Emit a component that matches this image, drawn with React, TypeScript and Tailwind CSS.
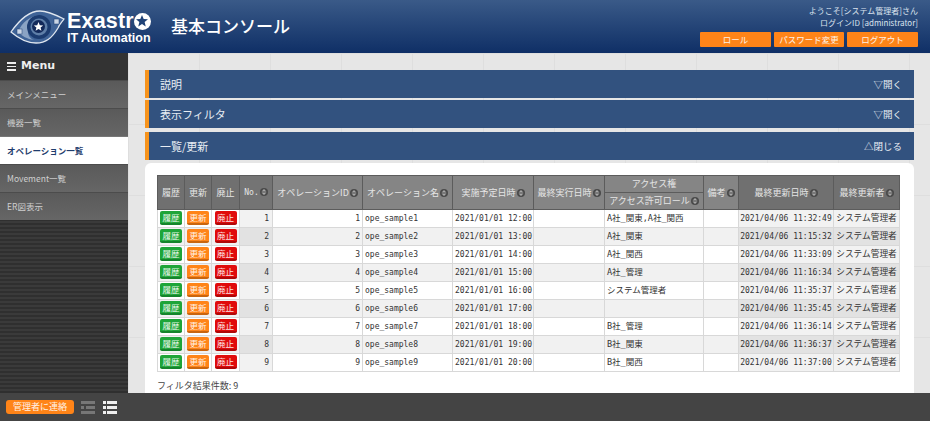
const JP = "font-['Noto_Sans_CJK_JP','Noto_Sans',sans-serif]"
const MONO = "font-['DejaVu_Sans_Mono','Noto_Sans_CJK_JP',monospace]"

const ROWS = [
  ["1", "ope_sample1", "2021/01/01 12:00", "A社_関東,A社_関西", "2021/04/06 11:32:49"],
  ["2", "ope_sample2", "2021/01/01 13:00", "A社_関東", "2021/04/06 11:15:32"],
  ["3", "ope_sample3", "2021/01/01 14:00", "A社_関西", "2021/04/06 11:33:09"],
  ["4", "ope_sample4", "2021/01/01 15:00", "A社_管理", "2021/04/06 11:16:34"],
  ["5", "ope_sample5", "2021/01/01 16:00", "システム管理者", "2021/04/06 11:35:37"],
  ["6", "ope_sample6", "2021/01/01 17:00", "", "2021/04/06 11:35:45"],
  ["7", "ope_sample7", "2021/01/01 18:00", "B社_管理", "2021/04/06 11:36:14"],
  ["8", "ope_sample8", "2021/01/01 19:00", "B社_関東", "2021/04/06 11:36:37"],
  ["9", "ope_sample9", "2021/01/01 20:00", "B社_関西", "2021/04/06 11:37:00"],
]

const MENU = ["メインメニュー", "機器一覧", "オペレーション一覧", "Movement一覧", "ER図表示"]

function Logo() {
  return (
    <svg width="57" height="38" viewBox="0 0 57 38" className="shrink-0">
      <path d="M1 24 C8 14 18 3 30 3 C38 3 46 7 54 11 C52 14 50 15 48 20 C42 30 36 35 26 35 C16 35 8 30 1 24 Z" fill="#3f6397" stroke="#dfe6ef" strokeWidth="1.300" />
      <path d="M8 24 C12 14 20 8 30 7 C22 12 18 18 18 24 C18 28 21 31 24 32 C17 31 12 28 8 24 Z" fill="#8aa3c4" />
      <circle cx="29" cy="19" r="12" fill="#1c3c70" />
      <circle cx="29" cy="19" r="8.500" fill="#5f7fa8" />
      <circle cx="28.500" cy="18.500" r="6.500" fill="#12295a" />
      <path d="M28.500 14 L29.800 17.200 L33.200 17.400 L30.600 19.500 L31.400 22.800 L28.500 21 L25.600 22.800 L26.400 19.500 L23.800 17.400 L27.200 17.200 Z" fill="#fff" />
      <rect x="44" y="11" width="5" height="5" fill="#c9d5e5" stroke="#1c3c70" strokeWidth="0.500" />
      <rect x="7" y="21" width="5" height="5" fill="#c9d5e5" stroke="#1c3c70" strokeWidth="0.500" />
    </svg>
  )
}

function SortIcon() {
  return (
    <svg width="8" height="8" viewBox="0 0 8 8" className="inline-block align-[-1px] ml-px">
      <circle cx="4" cy="4" r="4" fill="#4a4a4a" />
      <path d="M4 1 L6.500 3.400 H1.500 Z M4 7 L6.500 4.600 H1.500 Z" fill="#a8a8a8" />
    </svg>
  )
}

function Panel({ title, action }: { title: string; action: string }) {
  return (
    <div className="h-[28px] shrink-0 flex items-center justify-between bg-[#32527f] border-l-[4px] border-[#f7941d] pl-[11px] pr-[12px] text-[#e8edf3]">
      <span className="text-[11px]">{title}</span>
      <span className="text-[9.500px]">{action}</span>
    </div>
  )
}

function ActionButton({ label, color }: { label: string; color: string }) {
  return (
    <span className={`block w-[22px] h-[14px] mx-auto -mt-[2px] rounded-[2px] text-[8.500px] leading-[12px] text-center text-white/90 border-b-2 ${color}`}>
      {label}
    </span>
  )
}

function HeadCell({ label, sort = true, className = "", colSpan, rowSpan }: { label: string; sort?: boolean; className?: string; colSpan?: number; rowSpan?: number }) {
  return (
    <th colSpan={colSpan} rowSpan={rowSpan} className={`border border-[#5c5c5c] font-normal text-[#e6e6e6] p-0 whitespace-nowrap ${className}`}>
      {label}
      {sort && <SortIcon />}
    </th>
  )
}

export default function App() {
  return (
    <div className={`w-[930px] h-screen overflow-hidden flex flex-col bg-[#e6e6e6] ${JP}`}>
      {/* header */}
      <header className="h-[53px] shrink-0 flex items-start justify-between bg-gradient-to-b from-[#3a5a88] to-[#0f2f66]">
        <div className="flex items-start pl-[10px] pt-[8px]">
          <Logo />
          <div className="mt-[3px] text-white font-['Liberation_Sans',sans-serif] font-bold">
            <div className="flex items-center text-[21.500px] leading-[20px] tracking-[0.2px]">
              Exastr
              <span className="inline-flex items-center justify-center w-[17px] h-[17px] rounded-full bg-white">
                <svg width="12" height="12" viewBox="0 0 10 10">
                  <path d="M5 0 L6.400 3.400 L10 3.600 L7.200 5.900 L8.100 9.500 L5 7.500 L1.900 9.500 L2.800 5.900 L0 3.600 L3.600 3.400 Z" fill="#1f4277" />
                </svg>
              </span>
            </div>
            <div className="text-[12.500px] leading-[13px] mt-px">IT Automation</div>
          </div>
          <div className="ml-[20px] mt-[8px] text-white text-[17px] font-medium leading-5">基本コンソール</div>
        </div>
        <div className="flex flex-col items-end pr-[12px] pt-[5px] text-[8px] leading-[12px] text-[#dbe3ee]">
          <div>ようこそ[システム管理者]さん</div>
          <div>ログインID [administrator]</div>
          <div className="flex gap-[3px] mt-[3px]">
            {[
              ["ロール", "w-[71px]"],
              ["パスワード変更", "w-[70px]"],
              ["ログアウト", "w-[71px]"],
            ].map(([label, width]) => (
              <span key={label} className={`h-[15px] ${width} rounded-[1px] bg-[#ff8418] text-center text-[8.500px] leading-[15px] text-white/90`}>
                {label}
              </span>
            ))}
          </div>
        </div>
      </header>

      <div className="flex-1 min-h-0 flex">
        {/* sidebar */}
        <aside className="w-[128px] shrink-0 flex flex-col bg-[repeating-linear-gradient(0deg,#2f2f2f,#2f2f2f_2px,#3a3a3a_2px,#3a3a3a_4px)]">
          <div className="h-[27px] shrink-0 flex items-center gap-[5px] pl-[7px] bg-[#333] text-[#eee] text-[11px] font-bold font-['DejaVu_Sans',sans-serif]">
            <span className="flex flex-col gap-[2px]">
              <span className="block w-[9px] h-[1.500px] bg-[#eee]" />
              <span className="block w-[9px] h-[1.500px] bg-[#eee]" />
              <span className="block w-[9px] h-[1.500px] bg-[#eee]" />
            </span>
            Menu
          </div>
          {MENU.map((item) => {
            const active = item === "オペレーション一覧"
            return (
              <div
                key={item}
                className={
                  active
                    ? "h-[28px] shrink-0 flex items-center pl-[7px] bg-white text-[#1f3d6d] text-[8.500px] font-bold border-t border-[#777]"
                    : "h-[28px] shrink-0 flex items-center pl-[7px] bg-gradient-to-b from-[#5a5a5a] to-[#666] text-[#cfcfcf] text-[8.500px] border-t border-[#4c4c4c]"
                }
              >
                {item}
              </div>
            )
          })}
        </aside>

        {/* main */}
        <main className="flex-1 min-w-0 flex flex-col gap-[2px] pt-[17px] pl-[17px] pr-[16px] overflow-hidden bg-[#e6e6e6] bg-[linear-gradient(#dedede_1px,transparent_1px),linear-gradient(90deg,#dedede_1px,transparent_1px)] bg-[length:71px_71px]">
          <Panel title="説明" action="▽開く" />
          <Panel title="表示フィルタ" action="▽開く" />
          <div className="mt-[2px]">
            <Panel title="一覧/更新" action="△閉じる" />
          </div>
          <section className="mt-px flex-1 bg-white rounded-t-[6px] pt-[12px] px-[12px]">
            <table className="table-fixed border-collapse w-[742px] border border-[#666] text-[9px]">
              <colgroup>
                <col className="w-[27px]" />
                <col className="w-[27px]" />
                <col className="w-[28px]" />
                <col className="w-[33px]" />
                <col className="w-[90px]" />
                <col className="w-[90px]" />
                <col className="w-[81px]" />
                <col className="w-[71px]" />
                <col className="w-[99px]" />
                <col className="w-[35px]" />
                <col className="w-[95px]" />
                <col className="w-[66px]" />
              </colgroup>
              <thead>
                <tr className="h-[17px]">
                  <HeadCell label="履歴" sort={false} rowSpan={2} className="bg-[#707070]" />
                  <HeadCell label="更新" sort={false} rowSpan={2} className="bg-[#707070]" />
                  <HeadCell label="廃止" sort={false} rowSpan={2} className="bg-[#707070]" />
                  <HeadCell label="No." rowSpan={2} className={`bg-[#747474] ${MONO} text-[8px]`} />
                  <HeadCell label="オペレーションID" rowSpan={2} className="bg-[#858585]" />
                  <HeadCell label="オペレーション名" rowSpan={2} className="bg-[#858585]" />
                  <HeadCell label="実施予定日時" rowSpan={2} className="bg-[#858585]" />
                  <HeadCell label="最終実行日時" rowSpan={2} className="bg-[#858585]" />
                  <HeadCell label="アクセス権" sort={false} className="bg-[#858585]" />
                  <HeadCell label="備考" rowSpan={2} className="bg-[#858585]" />
                  <HeadCell label="最終更新日時" rowSpan={2} className="bg-[#707070]" />
                  <HeadCell label="最終更新者" rowSpan={2} className="bg-[#707070]" />
                </tr>
                <tr className="h-[17px]">
                  <HeadCell label="アクセス許可ロール" className="bg-[#858585]" />
                </tr>
              </thead>
              <tbody>
                {ROWS.map(([no, name, planned, role, updated], i) => {
                  const bg = i % 2 === 0 ? "bg-white" : "bg-[#f1f1f1]"
                  const dark = i % 2 === 0 ? "bg-[#f2f2f2]" : "bg-[#e2e2e2]"
                  const cell = "border border-[#d8d8d8] text-[#333] leading-none whitespace-nowrap p-0"
                  return (
                    <tr key={no} className="h-[18px]">
                      <td className={`${cell} ${bg}`}>
                        <ActionButton label="履歴" color="bg-[#1fa539] border-[#15842b]" />
                      </td>
                      <td className={`${cell} ${bg}`}>
                        <ActionButton label="更新" color="bg-[#ff8418] border-[#c9650f]" />
                      </td>
                      <td className={`${cell} ${bg}`}>
                        <ActionButton label="廃止" color="bg-[#e00b0b] border-[#b00808]" />
                      </td>
                      <td className={`${cell} ${dark} ${MONO} text-[8px] text-right pr-[3px]`}>{no}</td>
                      <td className={`${cell} ${bg} ${MONO} text-[8px] text-right pr-[2px]`}>{no}</td>
                      <td className={`${cell} ${bg} ${MONO} text-[8px] pl-[2px]`}>{name}</td>
                      <td className={`${cell} ${bg} ${MONO} text-[8px] pl-[2px]`}>{planned}</td>
                      <td className={`${cell} ${bg}`} />
                      <td className={`${cell} ${bg} ${MONO} text-[8.500px] pl-[2px]`}>{role}</td>
                      <td className={`${cell} ${bg}`} />
                      <td className={`${cell} ${dark} ${MONO} text-[8px] text-center`}>{updated}</td>
                      <td className={`${cell} ${dark} text-[8.700px] text-center`}>システム管理者</td>
                    </tr>
                  )
                })}
              </tbody>
            </table>
            <div className="mt-[7px] text-[9px] text-[#444]">フィルタ結果件数: 9</div>
          </section>
        </main>
      </div>

      {/* footer */}
      <footer className="h-[28px] shrink-0 flex items-center gap-[6px] pl-[6px] bg-[#444]">
        <span className="w-[68px] h-[14px] rounded-[3px] bg-[#ff8418] text-center text-[9px] leading-[14px] text-white/90">管理者に連絡</span>
        <svg width="14" height="13" viewBox="0 0 14 13" className="ml-[1px]">
          <path d="M0 0H14V3H0ZM0 5H3V8H0ZM5 5H14V8H5ZM0 10H14V13H0Z" fill="#777" />
        </svg>
        <svg width="14" height="13" viewBox="0 0 14 13" className="ml-[2px]">
          <path d="M0 0H3V3H0ZM4 0H14V3H4ZM0 5H3V8H0ZM4 5H14V8H4ZM0 10H3V13H0ZM4 10H14V13H4Z" fill="#eee" />
        </svg>
      </footer>
    </div>
  )
}
